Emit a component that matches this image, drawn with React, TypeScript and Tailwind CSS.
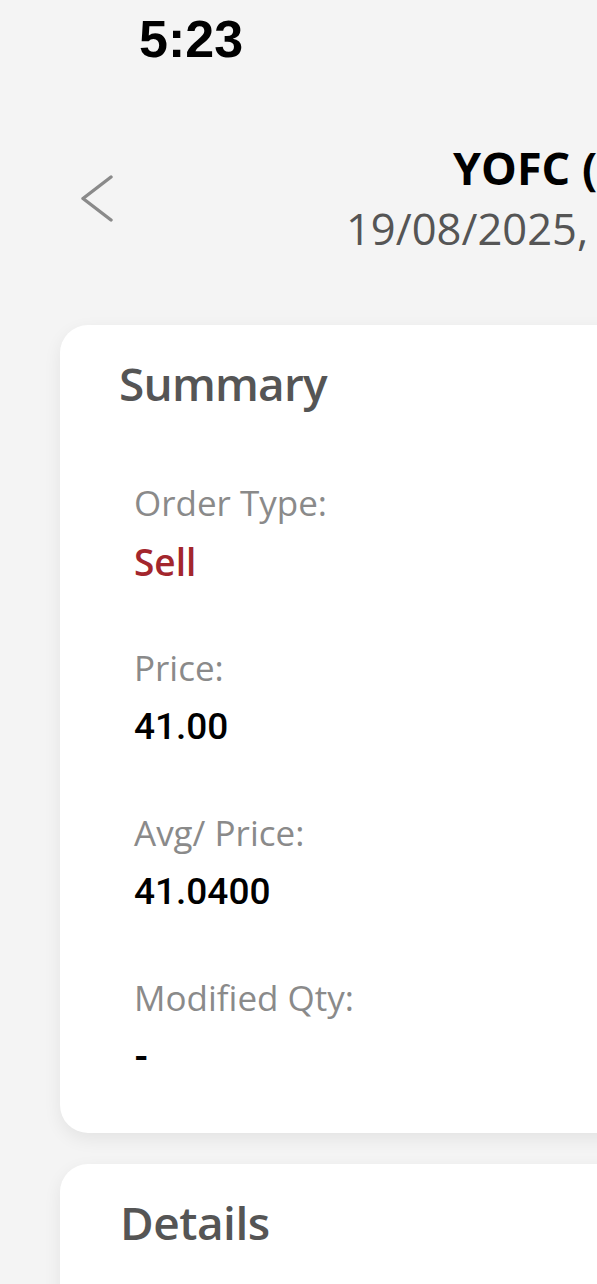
import React from "react";

const OS = "font-['Open_Sans','Noto_Sans',sans-serif]";
const RB = "font-['Roboto','Noto_Sans',sans-serif]";

function Item({ label, value, valueClass }: { label: string; value: string; valueClass: string }) {
  return (
    <div className="flex flex-col">
      <div className={`${OS} text-[35px] leading-none h-[34px] text-[#8a8a8a] whitespace-nowrap`}>{label}</div>
      <div className={`mt-[24px] h-[36px] leading-none whitespace-nowrap ${valueClass}`}>{value}</div>
    </div>
  );
}

export default function App() {
  return (
    <div className="w-[597px] h-[1284px] overflow-hidden bg-[#f4f4f4]">
      {/* status bar */}
      <div className="pt-[13px] pl-[139px] h-[64px]">
        <span className="font-['Liberation_Sans',Arial,sans-serif] font-bold text-[52px] leading-none text-black">5:23</span>
      </div>

      {/* header */}
      <div className="mt-[81px] flex items-start">
        <div className="w-[120px] shrink-0 pl-[78px] pt-[30px]">
          <svg width="40" height="48" viewBox="0 0 40 48" fill="none">
            <path d="M33 2 L5 23.5 L33 45" stroke="#8a8a8a" strokeWidth="3.4" strokeLinecap="round" strokeLinejoin="round" />
          </svg>
        </div>
        <div className="flex flex-col min-w-0">
          <div className={`${OS} font-bold text-[45px] leading-none text-black whitespace-nowrap ml-[333px]`}>YOFC (06869)</div>
          <div className={`${OS} text-[43.5px] leading-none text-[#555555] whitespace-nowrap ml-[226px] mt-[17px]`}>19/08/2025, 10:15:32</div>
        </div>
      </div>

      {/* Summary card */}
      <div className="ml-[60px] mt-[74px] w-[600px] rounded-[28px] bg-white shadow-[0_6px_18px_rgba(0,0,0,0.07)] pt-[35px] pb-[59px]">
        <div className={`${OS} font-semibold text-[46px] leading-none text-[#555555] pl-[59px] tracking-[-0.8px]`}>Summary</div>
        <div className="mt-[79px] pl-[74px] flex flex-col gap-[71px]">
          <Item label="Order Type:" value="Sell" valueClass={`${OS} font-semibold text-[37px] text-[#a3262d]`} />
          <Item label="Price:" value="41.00" valueClass={`${RB} font-medium text-[37px] text-black`} />
          <Item label="Avg/ Price:" value="41.0400" valueClass={`${RB} font-medium text-[37px] text-black`} />
          <Item label="Modified Qty:" value="-" valueClass={`${RB} font-bold text-[37px] text-black`} />
        </div>
      </div>

      {/* Details card */}
      <div className="ml-[60px] mt-[31px] w-[600px] h-[200px] rounded-[28px] bg-white shadow-[0_6px_18px_rgba(0,0,0,0.07)] pt-[35px]">
        <div className={`${OS} font-semibold text-[46px] leading-none text-[#555555] pl-[60px] tracking-[-0.5px]`}>Details</div>
      </div>
    </div>
  );
}
